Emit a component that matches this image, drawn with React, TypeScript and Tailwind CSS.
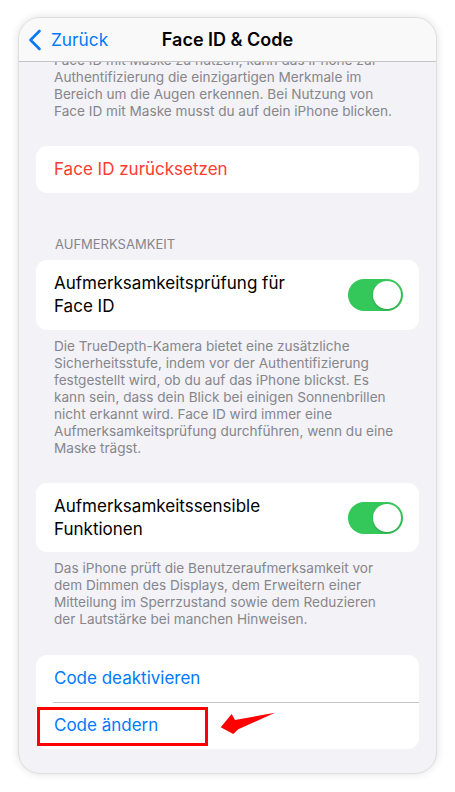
import React from 'react';

const font = { fontFamily: 'Inter, "Noto Sans", sans-serif' };

function Toggle() {
  return (
    <div className="relative h-[32px] w-[55px] shrink-0 rounded-full bg-[#34c759]">
      <div className="absolute right-[2px] top-[2px] h-[28px] w-[28px] rounded-full bg-white shadow-[0_1px_2px_rgba(0,0,0,0.2)]" />
    </div>
  );
}

function Footnote({ lines, className = '' }: { lines: string[]; className?: string }) {
  return (
    <div className={`px-[35px] text-[13.6px] leading-[17px] text-[#86868b] ${className}`}>
      {lines.map((l) => (
        <div key={l} className="whitespace-nowrap">
          {l}
        </div>
      ))}
    </div>
  );
}

export default function App() {
  return (
    <div className="min-h-screen bg-white pl-[18px] pt-[17px]" style={font}>
      <div className="flex h-[757px] w-[419px] flex-col overflow-hidden rounded-[22px] border border-[#dedede] bg-[#f2f2f7] shadow-[0_0_8px_rgba(0,0,0,0.12)]">
        {/* Nav bar */}
        <div className="relative flex h-[44px] shrink-0 items-center border-b border-[#c4c4c6] bg-[#f9f9f9]">
          <div className="flex items-center pl-[9px] text-[#007aff]">
            <svg width="14" height="22" viewBox="0 0 14 22" fill="none">
              <path d="M11.5 2 L2.5 11 L11.5 20" stroke="#007aff" strokeWidth="2.6" strokeLinecap="round" strokeLinejoin="round" />
            </svg>
            <span className="ml-[9px] text-[17.3px]">Zurück</span>
          </div>
          <div className="absolute inset-x-0 text-center text-[18px] font-semibold text-black">Face ID &amp; Code</div>
        </div>

        {/* Content */}
        <div className="flex-1 overflow-hidden">
          <div className="-mt-[10px]">
            <Footnote
              lines={[
                'Face ID mit Maske zu nutzen, kann das iPhone zur',
                'Authentifizierung die einzigartigen Merkmale im',
                'Bereich um die Augen erkennen. Bei Nutzung von',
                'Face ID mit Maske musst du auf dein iPhone blicken.',
              ]}
            />

            <div className="mx-[17px] mt-[26px] flex h-[47px] items-center rounded-[11px] bg-white px-[18px] text-[17px] text-[#ff3b30]">
              Face ID zurücksetzen
            </div>

            <div className="mt-[43px] px-[36px] text-[13px] uppercase leading-[16px] text-[#86868b]">Aufmerksamkeit</div>

            <div className="mx-[17px] mt-[8px] flex h-[70px] items-center justify-between rounded-[11px] bg-white pl-[18px] pr-[16px]">
              <div className="text-[17px] leading-[23px] text-black">
                Aufmerksamkeitsprüfung für
                <br />
                Face ID
              </div>
              <Toggle />
            </div>

            <Footnote
              className="mt-[8px]"
              lines={[
                'Die TrueDepth-Kamera bietet eine zusätzliche',
                'Sicherheitsstufe, indem vor der Authentifizierung',
                'festgestellt wird, ob du auf das iPhone blickst. Es',
                'kann sein, dass dein Blick bei einigen Sonnenbrillen',
                'nicht erkannt wird. Face ID wird immer eine',
                'Aufmerksamkeitsprüfung durchführen, wenn du eine',
                'Maske trägst.',
              ]}
            />

            <div className="mx-[17px] mt-[26px] flex h-[69px] items-center justify-between rounded-[11px] bg-white pl-[18px] pr-[16px]">
              <div className="text-[17px] leading-[23px] text-black">
                Aufmerksamkeitssensible
                <br />
                Funktionen
              </div>
              <Toggle />
            </div>

            <Footnote
              className="mt-[8px]"
              lines={[
                'Das iPhone prüft die Benutzeraufmerksamkeit vor',
                'dem Dimmen des Displays, dem Erweitern einer',
                'Mitteilung im Sperrzustand sowie dem Reduzieren',
                'der Lautstärke bei manchen Hinweisen.',
              ]}
            />

            <div className="mx-[17px] mt-[27px] rounded-[11px] bg-white">
              <div className="flex h-[47px] items-center px-[18px] text-[17px] text-[#007aff]">Code deaktivieren</div>
              <div className="ml-[17px] h-px bg-[#c6c6c8]" />
              <div className="relative flex h-[46px] items-center px-[18px] text-[17px] text-[#007aff]">
                Code ändern
                <div className="absolute left-[1px] top-[4px] h-[39px] w-[171px] border-[3px] border-[#ff0000]" />
                <svg className="absolute left-[179px] top-[5px]" width="65" height="30" viewBox="0 0 65 30">
                  <polygon points="5.7,19.3 16.7,6 20,12 60,4.7 23.3,21.3 18.3,26" fill="#ff0000" />
                </svg>
              </div>
            </div>
          </div>
        </div>
      </div>
    </div>
  );
}
